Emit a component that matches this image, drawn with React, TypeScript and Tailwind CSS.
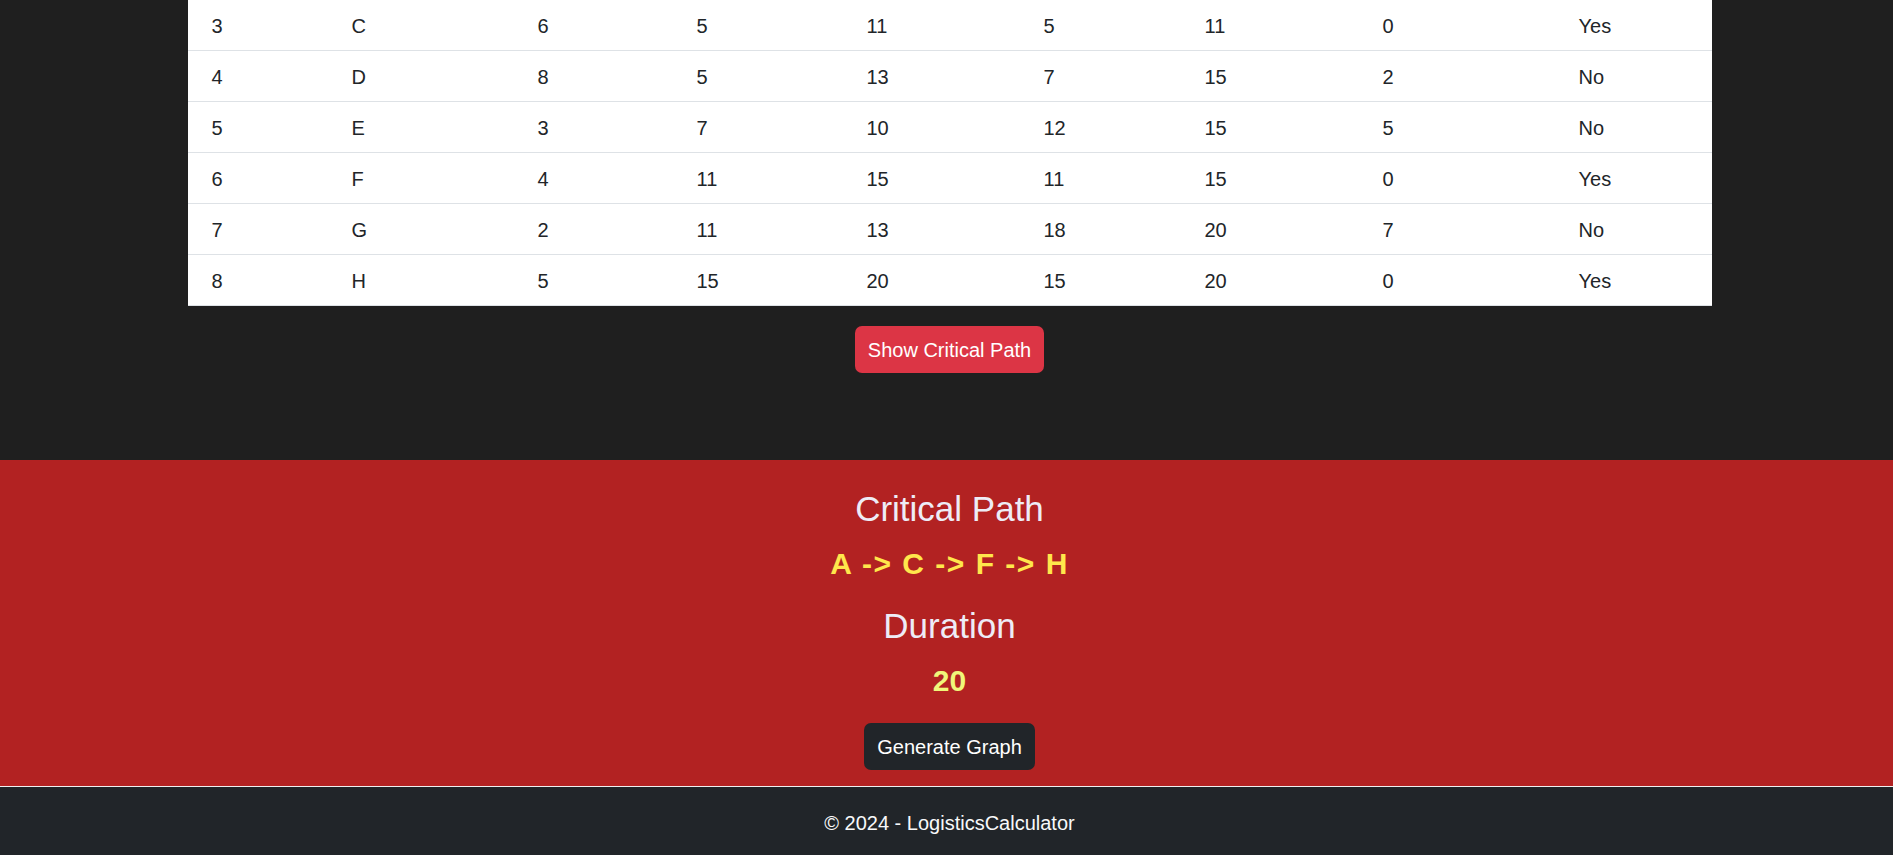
const rows = [
  ["3", "C", "6", "5", "11", "5", "11", "0", "Yes"],
  ["4", "D", "8", "5", "13", "7", "15", "2", "No"],
  ["5", "E", "3", "7", "10", "12", "15", "5", "No"],
  ["6", "F", "4", "11", "15", "11", "15", "0", "Yes"],
  ["7", "G", "2", "11", "13", "18", "20", "7", "No"],
  ["8", "H", "5", "15", "20", "15", "20", "0", "Yes"],
];

export default function App() {
  return (
    <div className="min-h-screen bg-[#1f1f1f] font-['Liberation_Sans',Arial,sans-serif] text-[20px]">
      <main className="pl-[6px] pb-[87px]">
        <div className="mx-auto w-[1524px] bg-white text-[#212529]">
          {rows.map((row) => (
            <div
              key={row[0]}
              className="grid h-[51px] grid-cols-[140px_186px_159px_170px_177px_161px_178px_196px_157px] border-b border-[#dee2e6]"
            >
              {row.map((cell, i) => (
                <div key={i} className="pl-[24px] pt-[11px] leading-[30px]">
                  {cell}
                </div>
              ))}
            </div>
          ))}
        </div>

        <div className="mt-[20px] flex justify-center">
          <button className="h-[47px] w-[189px] rounded-[7px] bg-[#dc3545] leading-[30px] text-white">
            Show Critical Path
          </button>
        </div>
      </main>

      <section className="flex flex-col items-center bg-[#b22222] pl-[6px] pt-[28px] pb-[16px]">
        <h3 className="h-[42px] text-[35px] leading-[42px] font-medium text-[#eeecf6]">
          Critical Path
        </h3>
        <h4 className="mt-[16px] h-[36px] text-[30px] leading-[36px] font-bold tracking-[1.5px] text-[#ffe74c]">
          A -&gt; C -&gt; F -&gt; H
        </h4>
        <h3 className="mt-[23px] h-[42px] text-[35px] leading-[42px] font-medium text-[#eeecf6]">
          Duration
        </h3>
        <h4 className="mt-[16px] h-[36px] text-[30px] leading-[36px] font-bold text-[#f0f67a]">
          20
        </h4>
        <button className="mt-[24px] h-[47px] w-[171px] rounded-[7px] bg-[#212529] leading-[30px] text-white">
          Generate Graph
        </button>
      </section>

      <footer className="h-[69px] border-t border-[#f0f0f0] bg-[#212529] pl-[6px] pt-[21px] text-center leading-[30px] text-[#f8f9fa]">
        © 2024 - LogisticsCalculator
      </footer>
    </div>
  );
}
